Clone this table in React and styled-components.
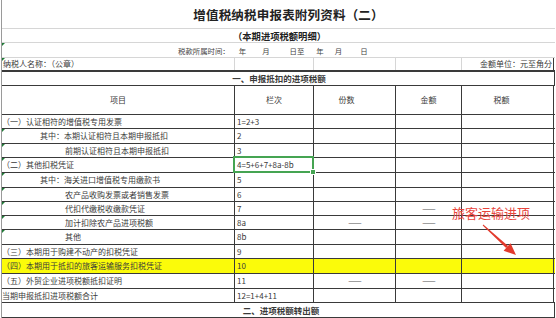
import React from 'react';
import styled, { createGlobalStyle } from 'styled-components';

const GlobalStyle = createGlobalStyle`
  html, body {
    margin: 0;
    padding: 0;
    background: #fff;
  }
  body {
    font-family: "Noto Sans CJK SC", "Noto Sans", sans-serif;
    color: #3a3a3a;
    overflow: hidden;
  }
`;

const COLS = '233px 79px 82px 66px 92px';
const DARK = '#3a3a3a';
const GRID = '#d6d6d6';

const Page = styled.div`
  position: relative;
  width: 556px;
  height: 318px;
  overflow: hidden;
`;

const Sheet = styled.div`
  margin-left: 1px;
  width: 553px;
  border-left: 1px solid #9a9a9a;
`;

const Row = styled.div`
  display: grid;
  grid-template-columns: ${p => p.$cols || COLS};
  height: ${p => p.$h}px;
  box-sizing: border-box;
  border-bottom: ${p => p.$bw || 1}px solid ${p => p.$line || DARK};
  background: ${p => p.$bg || 'transparent'};
`;

const Cell = styled.div`
  position: relative;
  display: flex;
  align-items: center;
  justify-content: ${p =>
    p.$align === 'center' ? 'center' : p.$align === 'right' ? 'flex-end' : 'flex-start'};
  padding: 0 ${p => p.$pr || 0}px 0 ${p => p.$indent || 0}px;
  border-right: 1px solid ${p => p.$line || DARK};
  font-size: ${p => p.$size || 8}px;
  font-weight: ${p => (p.$bold ? 700 : 400)};
  line-height: 1;
  white-space: nowrap;

  &::before {
    content: '';
    display: ${p => (p.$flag ? 'block' : 'none')};
    position: absolute;
    left: 0;
    top: 0;
    border-top: 3px solid #1f7a36;
    border-right: 3px solid transparent;
  }

  &::after {
    content: '';
    display: ${p => (p.$selected ? 'block' : 'none')};
    position: absolute;
    left: -2px;
    top: -2px;
    right: -1px;
    bottom: -1px;
    border: 2px solid #45a452;
  }
`;

const Handle = styled.span`
  position: absolute;
  right: -3px;
  bottom: -3px;
  width: 4px;
  height: 4px;
  background: #45a452;
  border: 1px solid #fff;
  z-index: 2;
`;

const Title = styled.div`
  height: 29px;
  box-sizing: border-box;
  border-bottom: 1px solid ${GRID};
  display: flex;
  align-items: center;
  justify-content: center;
  padding-left: 20px;
  font-size: 12.5px;
  font-weight: 700;
  color: #222;
  letter-spacing: 0.2px;
`;

const SubTitle = styled.div`
  height: 14px;
  box-sizing: border-box;
  border-bottom: 1px solid ${GRID};
  display: flex;
  align-items: center;
  justify-content: center;
  padding-left: 2px;
  font-size: 9.3px;
  font-weight: 700;
  color: #222;
`;

const TimeLine = styled.div`
  position: relative;
  height: 15px;
  box-sizing: border-box;
  border-bottom: 1px solid ${GRID};
  display: flex;
  align-items: center;
  padding-left: 176px;
  font-size: 7.4px;
  color: #444;

  &::before {
    content: '';
    position: absolute;
    left: 0;
    top: 0;
    border-top: 3px solid #1f7a36;
    border-right: 3px solid transparent;
  }
`;

const TimeItem = styled.span`
  margin-left: ${p => p.$ml || 0}px;
`;

const Dash = styled.span`
  font-size: 8px;
  color: #555;
  letter-spacing: -1px;
`;

const Note = styled.div`
  position: absolute;
  left: 452px;
  top: 205px;
  font-size: 13px;
  line-height: 16px;
  color: #e8453c;
  white-space: nowrap;
`;

const Arrow = styled.svg`
  position: absolute;
  left: 0;
  top: 0;
  pointer-events: none;
`;

const timeParts = [
  ['税款所属时间：', 0],
  ['年', 9],
  ['月', 16],
  ['日至', 20],
  ['年', 12],
  ['月', 11],
  ['日', 18],
];

const rows = [
  { label: '（一）认证相符的增值税专用发票', code: '1=2+3', h: 14 },
  { label: '其中：本期认证相符且本期申报抵扣', code: '2', indent: 38, h: 15, flag: true },
  { label: '前期认证相符且本期申报抵扣', code: '3', indent: 63, h: 14, flag: true },
  { label: '（二）其他扣税凭证', code: '4=5+6+7+8a-8b', h: 15, flag: true, selected: true },
  { label: '其中：海关进口增值税专用缴款书', code: '5', indent: 38, h: 15, flag: true },
  { label: '农产品收购发票或者销售发票', code: '6', indent: 63, h: 14, flag: true },
  { label: '代扣代缴税收缴款凭证', code: '7', indent: 63, h: 14, flag: true, dash: [false, true] },
  { label: '加计扣除农产品进项税额', code: '8a', indent: 63, h: 14, flag: true, dash: [true, true] },
  { label: '其他', code: '8b', indent: 63, h: 15, flag: true },
  { label: '（三）本期用于购建不动产的扣税凭证', code: '9', h: 14 },
  { label: '（四）本期用于抵扣的旅客运输服务扣税凭证', code: '10', h: 15, highlight: true },
  { label: '（五）外贸企业进项税额抵扣证明', code: '11', h: 15, dash: [true, true] },
  { label: '当期申报抵扣进项税额合计', code: '12=1+4+11', h: 14 },
];

const DataRow = ({ row }) => {
  const dash = row.dash || [false, false];
  return (
    <Row $h={row.h} $bg={row.highlight ? '#fbfb0a' : undefined}>
      <Cell $indent={row.indent || 0} $flag={row.flag}>
        {row.label}
      </Cell>
      <Cell $indent={2} $selected={row.selected}>
        {row.code}
        {row.selected && <Handle />}
      </Cell>
      <Cell $align="center">{dash[0] && <Dash>——</Dash>}</Cell>
      <Cell $align="center">{dash[1] && <Dash>——</Dash>}</Cell>
      <Cell />
    </Row>
  );
};

const App = () => (
  <Page>
    <GlobalStyle />
    <Sheet>
      <Title>增值税纳税申报表附列资料（二）</Title>
      <SubTitle>（本期进项税额明细）</SubTitle>
      <TimeLine>
        {timeParts.map(([t, ml], i) => (
          <TimeItem key={i} $ml={ml}>
            {t}
          </TimeItem>
        ))}
      </TimeLine>
      <Row $h={14} $bw={2} $line={DARK}>
        <Cell $indent={1} $line={GRID} $flag>
          纳税人名称：（公章）
        </Cell>
        <Cell $line={GRID} />
        <Cell $line={GRID} />
        <Cell $line={GRID} />
        <Cell $align="right" $pr={1} $line={DARK}>
          金额单位：元至角分
        </Cell>
      </Row>
      <Row $h={14} $cols="1fr">
        <Cell $align="center" $bold $size={8.5} $indent={2}>
          一、申报抵扣的进项税额
        </Cell>
      </Row>
      <Row $h={29}>
        <Cell $align="center">项目</Cell>
        <Cell $align="center">栏次</Cell>
        <Cell $align="center" $pr={16}>份数</Cell>
        <Cell $align="center">金额</Cell>
        <Cell $align="center" $pr={12}>税额</Cell>
      </Row>
      {rows.map((r, i) => (
        <DataRow key={i} row={r} />
      ))}
      <Row $h={15} $cols="1fr">
        <Cell $align="center" $bold $size={8.5} $indent={6}>
          二、进项税额转出额
        </Cell>
      </Row>
      <Row $h={12}>
        <Cell />
        <Cell />
        <Cell />
        <Cell />
        <Cell />
      </Row>
    </Sheet>
    <Note>旅客运输进项</Note>
    <Arrow width="556" height="318" viewBox="0 0 556 318">
      <polygon
        points="482.7,225.4 483.3,224.6 508.1,245.9 506.1,248.1"
        fill="#e23a2c"
      />
      <polygon points="516,255 503.6,250.8 510.6,243.2" fill="#e23a2c" />
    </Arrow>
  </Page>
);

export default App;
